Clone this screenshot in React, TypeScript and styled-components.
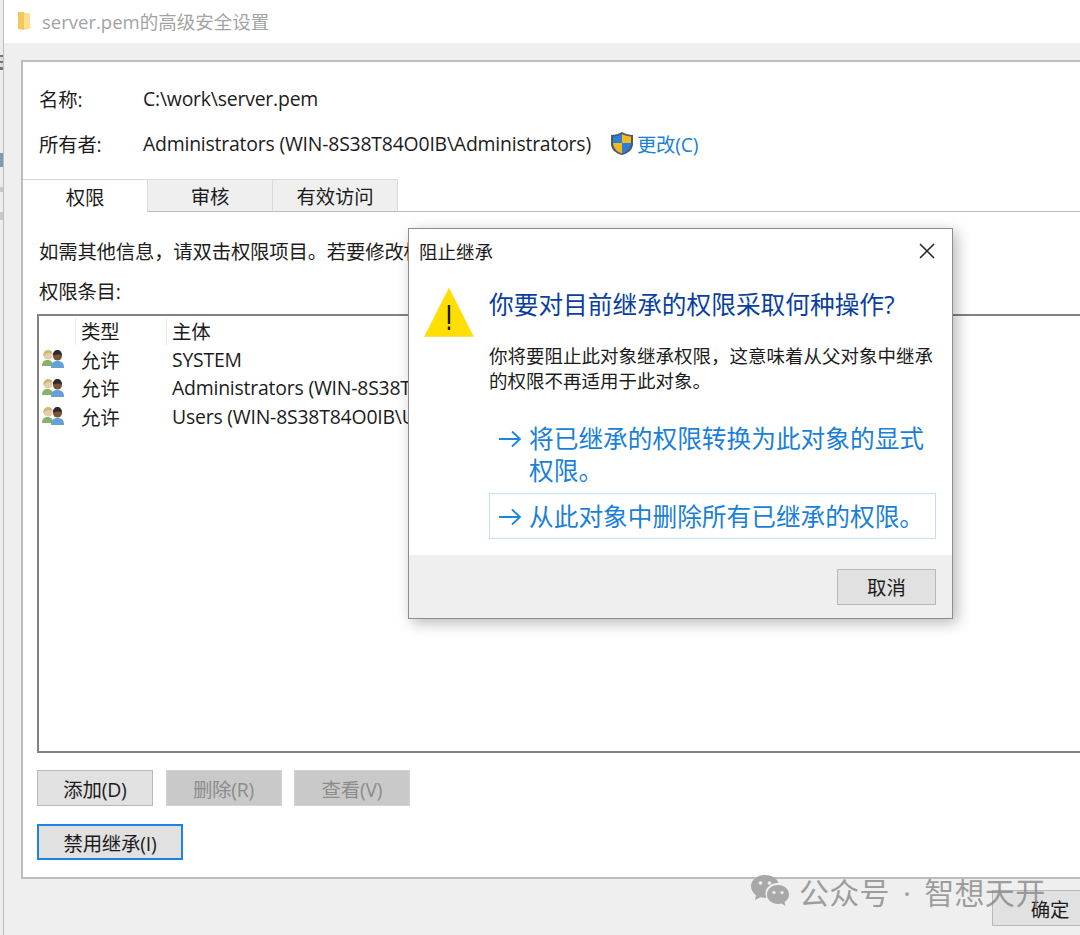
import { createGlobalStyle, styled } from "styled-components";

const rows = [
  { type: "允许", name: "SYSTEM" },
  { type: "允许", name: "Administrators (WIN-8S38T84O0IB\\Administrators)" },
  { type: "允许", name: "Users (WIN-8S38T84O0IB\\Users)" },
];

const FolderIcon = () => (
  <svg width="16" height="20" viewBox="0 0 16 20">
    <path d="M1 1h6v18l-6-1z" fill="#efc85e" />
    <path d="M7 2h5l1 1v13l2 1-8 2z" fill="#fae08e" />
  </svg>
);

const ShieldIcon = () => (
  <svg width="24" height="25" viewBox="0 0 24 25">
    <path d="M12 1C9 3 5 4 1 4v9c0 5 4 9 11 11 7-2 11-6 11-11V4C19 4 15 3 12 1z" fill="#4a5a6a" />
    <path d="M12 3C9.500 4.500 6 5.500 3 5.500V12h9z" fill="#2b7fd6" />
    <path d="M12 3c2.500 1.500 6 2.500 9 2.500V12h-9z" fill="#f5b821" />
    <path d="M3 12h9v10.500C7 21 3.500 17.500 3 12z" fill="#f5b821" />
    <path d="M21 12h-9v10.500c5-1.500 8.500-5 9-10.500z" fill="#2b7fd6" />
  </svg>
);

const PeopleIcon = () => (
  <svg width="22" height="20" viewBox="0 0 22 20">
    <path d="M0 17c0-4 2-6 5.500-6s5.500 2 5.500 6z" fill="#86b368" />
    <circle cx="6" cy="6" r="4.500" fill="#e6cfa6" />
    <path d="M1.500 7c-.5-4 2-6 4.500-6s4.500 1.500 4.500 4C8 3.500 5 4 3.500 5.500z" fill="#cdb877" />
    <path d="M9 19c0-5 2-7 6.500-7s6.500 2 6.500 7z" fill="#63a1d6" />
    <circle cx="15.500" cy="7" r="4.500" fill="#7a5238" />
    <path d="M11 6.500c-.3-3.500 2-5.500 4.500-5.500S20 3 20 6.500c-2-1.500-6-1.500-9 0z" fill="#2d2a2a" />
  </svg>
);

const WarningIcon = () => (
  <svg width="50" height="50" viewBox="0 0 50 50">
    <path d="M25 1L49.500 49.500H.500z" fill="#ffdf00" stroke="#f3d24a" strokeWidth="0.500" />
    <rect x="23.800" y="18" width="2.400" height="19" fill="#1c1c1c" />
    <rect x="23.800" y="39.500" width="2.400" height="3.500" fill="#1c1c1c" />
  </svg>
);

const ArrowIcon = () => (
  <svg width="24" height="18" viewBox="0 0 24 18">
    <path d="M1 9h21M14 1.500L22 9l-8 7.500" fill="none" stroke="#1a86e0" strokeWidth="1.800" />
  </svg>
);

const CloseIcon = () => (
  <svg width="16" height="16" viewBox="0 0 16 16">
    <path d="M1 1l14 14M15 1L1 15" fill="none" stroke="#222" strokeWidth="1.500" />
  </svg>
);

const WechatIcon = () => (
  <svg width="40" height="34" viewBox="0 0 40 34">
    <path d="M15 1C7 1 1 6 1 12.500c0 3.500 2 6.500 5 8.800L5 26l5.500-2.800c1.500.4 3 .6 4.500.6h1.500c-.6-1.400-1-2.800-1-4.300 0-6 5.500-10.500 12-10.500h1C27 4 21.500 1 15 1z" fill="#a8a8a8" />
    <path d="M28 11c-6 0-11 4-11 9.500S22 30 28 30c1.200 0 2.300-.2 3.400-.5l4.100 2.500-1-4c3-2 4.500-4.500 4.500-7.500C39 15 34 11 28 11z" fill="#a8a8a8" />
    <circle cx="10.500" cy="9" r="1.800" fill="#efefef" />
    <circle cx="19.500" cy="9" r="1.800" fill="#efefef" />
    <circle cx="24" cy="18.500" r="1.600" fill="#efefef" />
    <circle cx="32" cy="18.500" r="1.600" fill="#efefef" />
  </svg>
);

export default function App() {
  return (
    <Page>
      <GlobalStyle />
      <DesktopEdge />
      <SecurityWindow>
        <TitleBar>
          <FolderIcon />
          <TitleText>server.pem的高级安全设置</TitleText>
        </TitleBar>
        <WindowBody>
          <Panel>
            <InfoRow>
              <InfoLabel>名称:</InfoLabel>
              <span>C:\work\server.pem</span>
            </InfoRow>
            <InfoRow>
              <InfoLabel>所有者:</InfoLabel>
              <span>Administrators (WIN-8S38T84O0IB\Administrators)</span>
              <ChangeLink>
                <ShieldIcon />
                更改(C)
              </ChangeLink>
            </InfoRow>
            <Tabs>
              <Tab $active>权限</Tab>
              <Tab>审核</Tab>
              <Tab>有效访问</Tab>
            </Tabs>
            <TabContent>
              <HintText>如需其他信息，请双击权限项目。若要修改权限项目，请选择该项目并单击“编辑”。</HintText>
              <ListLabel>权限条目:</ListLabel>
              <ListBox>
                <ListHeader>
                  <IconCell />
                  <HeaderCell $width="91px">类型</HeaderCell>
                  <HeaderCell>主体</HeaderCell>
                </ListHeader>
                {rows.map((row) => (
                  <ListRow key={row.name}>
                    <IconCell>
                      <PeopleIcon />
                    </IconCell>
                    <TypeCell>{row.type}</TypeCell>
                    <span>{row.name}</span>
                  </ListRow>
                ))}
              </ListBox>
              <ButtonRow>
                <Button>添加(D)</Button>
                <Button $disabled>删除(R)</Button>
                <Button $disabled>查看(V)</Button>
              </ButtonRow>
              <FocusButton>禁用继承(I)</FocusButton>
            </TabContent>
          </Panel>
          <WindowFooter>
            <Button>确定</Button>
          </WindowFooter>
        </WindowBody>
      </SecurityWindow>

      <Dialog>
        <DialogTitleBar>
          <span>阻止继承</span>
          <CloseIcon />
        </DialogTitleBar>
        <DialogMain>
          <WarningIcon />
          <DialogText>
            <Question>你要对目前继承的权限采取何种操作?</Question>
            <Description>
              你将要阻止此对象继承权限，这意味着从父对象中继承的权限不再适用于此对象。
            </Description>
          </DialogText>
        </DialogMain>
        <Commands>
          <Command>
            <ArrowIcon />
            <span>将已继承的权限转换为此对象的显式权限。</span>
          </Command>
          <Command $hover>
            <ArrowIcon />
            <span>从此对象中删除所有已继承的权限。</span>
          </Command>
        </Commands>
        <DialogFooter>
          <Button $small>取消</Button>
        </DialogFooter>
      </Dialog>

      <Watermark>
        <WechatIcon />
        <span>公众号 · 智想天开</span>
      </Watermark>
    </Page>
  );
}

const GlobalStyle = createGlobalStyle`
  html, body {
    margin: 0;
    padding: 0;
    background: #fff;
  }
  * {
    box-sizing: border-box;
  }
`;

const Page = styled.div`
  position: relative;
  display: flex;
  width: 1080px;
  height: 935px;
  overflow: hidden;
  font-family: "Open Sans", "Noto Sans CJK SC", sans-serif;
  font-size: 19.4px;
  letter-spacing: -0.2px;
  color: #1c1c1c;
`;

const DesktopEdge = styled.div`
  flex: none;
  width: 3px;
  background: linear-gradient(
    #ececec 0 55px,
    #777 55px 57px,
    #ddd 57px 61px,
    #777 61px 63px,
    #ddd 63px 67px,
    #777 67px 70px,
    #ededed 70px 153px,
    #8497b4 153px 167px,
    #ededed 167px 187px,
    #c9c9c9 187px 192px,
    #ededed 192px 212px,
    #c9c9c9 212px 220px,
    #ededed 220px
  );
`;

const SecurityWindow = styled.div`
  flex: none;
  display: flex;
  flex-direction: column;
  width: 1105px;
  height: 935px;
  border-left: 1px solid #bdbdbd;
`;

const TitleBar = styled.div`
  display: flex;
  align-items: center;
  gap: 9px;
  height: 43px;
  padding: 0 0 1px 13px;
  background: #fff;
`;

const TitleText = styled.span`
  font-size: 18.5px;
  letter-spacing: 0;
  color: #a3a3a3;
`;

const WindowBody = styled.div`
  flex: 1;
  display: flex;
  flex-direction: column;
  padding: 17px 0 0 17px;
  background: #efefef;
`;

const Panel = styled.div`
  height: 819px;
  padding-top: 14px;
  background: #fff;
  border: 2px solid #bdbdbd;
  border-right: none;
`;

const InfoRow = styled.div`
  display: flex;
  align-items: center;
  height: 45px;
  padding-left: 16px;
`;

const InfoLabel = styled.span`
  width: 104px;
`;

const ChangeLink = styled.span`
  display: flex;
  align-items: center;
  gap: 3px;
  margin-left: 19px;
  color: #1a7fd8;
`;

const Tabs = styled.div`
  display: flex;
  height: 33px;
  margin-top: 13px;
  border-bottom: 1px solid #bdbdbd;
`;

const Tab = styled.div<{ $active?: boolean }>`
  display: flex;
  align-items: center;
  justify-content: center;
  width: 125px;
  height: ${(p) => (p.$active ? "33px" : "32px")};
  background: ${(p) => (p.$active ? "#fff" : "#efefef")};
  border: 1px solid #dadada;
  border-bottom: none;
  border-left: none;
`;

const TabContent = styled.div`
  padding: 26px 0 0 14px;
`;

const HintText = styled.div`
  height: 28px;
  padding-left: 2px;
  line-height: 28px;
  white-space: nowrap;
`;

const ListLabel = styled.div`
  height: 28px;
  margin-top: 12px;
  padding-left: 2px;
  line-height: 28px;
`;

const ListBox = styled.div`
  height: 439px;
  margin-top: 8px;
  padding-top: 2px;
  border: 2px solid #828282;
  border-right: none;
`;

const ListHeader = styled.div`
  display: flex;
  height: 27px;
  line-height: 28px;
`;

const IconCell = styled.div`
  display: flex;
  align-items: center;
  justify-content: center;
  flex: none;
  width: 36px;
  padding-right: 8px;
`;

const HeaderCell = styled.div<{ $width?: string }>`
  flex: none;
  width: ${(p) => p.$width ?? "auto"};
  padding-left: 5px;
  border-left: 1px solid #e6e6e6;
`;

const ListRow = styled.div`
  display: flex;
  align-items: center;
  height: 28.500px;
  white-space: nowrap;
`;

const TypeCell = styled.span`
  flex: none;
  width: 97px;
  padding-left: 6px;
`;

const ButtonRow = styled.div`
  display: flex;
  gap: 12.500px;
  margin-top: 17px;
`;

const Button = styled.div<{ $disabled?: boolean; $small?: boolean }>`
  display: flex;
  align-items: center;
  justify-content: center;
  width: ${(p) => (p.$small ? "99px" : "116px")};
  height: 36px;
  background: ${(p) => (p.$disabled ? "#c9c9c9" : "#e1e1e1")};
  border: 1px solid ${(p) => (p.$disabled ? "#d3d3d3" : "#b8b8b8")};
  color: ${(p) => (p.$disabled ? "#8c8c8c" : "#1c1c1c")};
`;

const FocusButton = styled.div`
  display: flex;
  align-items: center;
  justify-content: center;
  width: 146px;
  height: 36px;
  margin-top: 18px;
  background: #e1e1e1;
  border: 2px solid #1a84e0;
`;

const WindowFooter = styled.div`
  display: flex;
  justify-content: flex-end;
  padding-top: 11px;
`;

const Dialog = styled.div`
  position: absolute;
  top: 228px;
  left: 408px;
  display: flex;
  flex-direction: column;
  width: 545px;
  height: 391px;
  background: #fff;
  border: 1px solid #8d8d8d;
  box-shadow: 4px 4px 14px rgba(0, 0, 0, 0.28);
  letter-spacing: 0;
`;

const DialogTitleBar = styled.div`
  display: flex;
  align-items: center;
  justify-content: space-between;
  height: 44px;
  padding: 0 17px 0 10px;
  font-size: 18.500px;
`;

const DialogMain = styled.div`
  display: flex;
  gap: 15px;
  padding: 13px 16px 0 15px;

  > svg {
    flex: none;
    margin-top: 1px;
  }
`;

const DialogText = styled.div`
  flex: 1;
  min-width: 0;
`;

const Question = styled.div`
  height: 38px;
  line-height: 38px;
  font-size: 24.700px;
  color: #0a3fa0;
  white-space: nowrap;
`;

const Description = styled.div`
  margin-top: 19px;
  font-size: 18.500px;
  line-height: 25px;
`;

const Commands = styled.div`
  display: flex;
  flex-direction: column;
  padding: 22px 16px 0 80px;
`;

const Command = styled.div<{ $hover?: boolean }>`
  display: flex;
  gap: 7px;
  padding: 7px 8px 5px 8px;
  font-size: 24.700px;
  line-height: 32px;
  color: #1a7fd8;
  border: 1px solid ${(p) => (p.$hover ? "#bde0fa" : "transparent")};

  svg {
    flex: none;
    margin-top: 7px;
  }
`;

const DialogFooter = styled.div`
  display: flex;
  justify-content: flex-end;
  align-items: center;
  flex: 1;
  margin-top: 16px;
  padding-right: 16px;
  background: #efefef;
`;

const Watermark = styled.div`
  position: absolute;
  left: 750px;
  top: 869px;
  display: flex;
  align-items: center;
  gap: 9px;
  font-size: 30px;
  letter-spacing: 0.3px;
  word-spacing: 5px;
  color: rgba(120, 120, 120, 0.7);
`;
